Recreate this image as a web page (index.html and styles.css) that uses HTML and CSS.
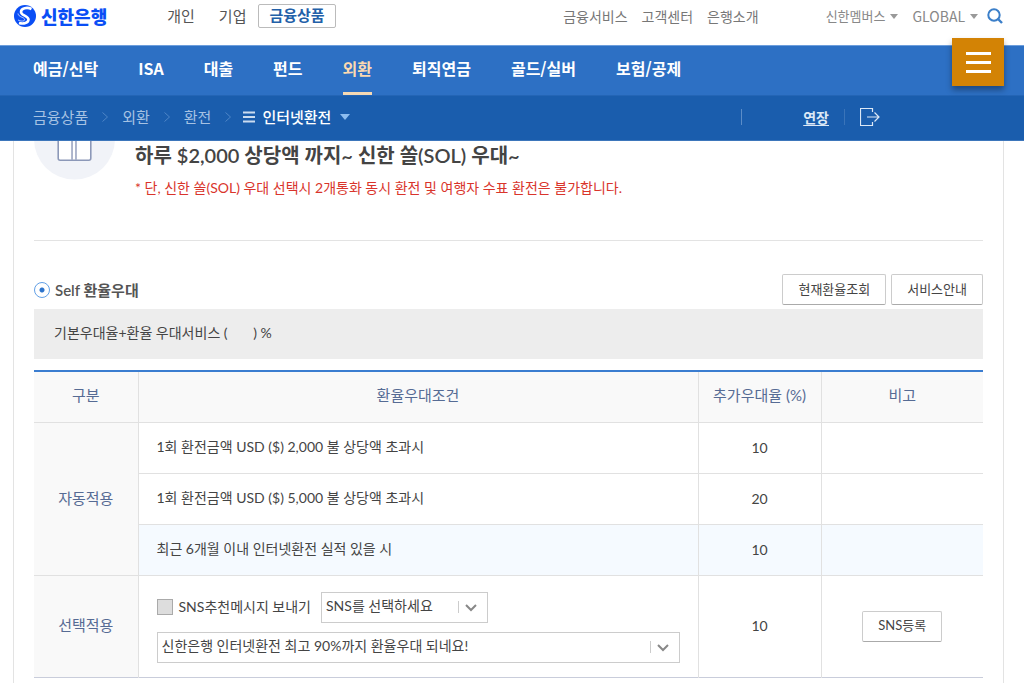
FILE: index.html
```html
<!DOCTYPE html>
<html lang="ko">
<head>
<meta charset="utf-8">
<meta name="viewport" content="width=device-width, initial-scale=1">
<title>신한은행 - 인터넷환전</title>
<link rel="stylesheet" href="styles.css">
</head>
<body>
<header class="header">
  <div class="topbar">
    <a class="logo" href="#">
      <svg class="logo-mark" viewBox="0 0 22 22" aria-hidden="true">
        <circle cx="11" cy="11" r="11" fill="#0a4ef5"/>
        <path d="M17.500 4C13 1.800 7 3.200 7 7 7 10.800 14.500 10.600 14.500 14.600 14.500 18 9.500 19.300 5 18" fill="none" stroke="#fff" stroke-width="2.600"/>
        <path d="M4 8.500C4.500 12.500 10.600 12 10.600 14.600 10.600 16.400 7.500 16.600 4 15" fill="none" stroke="#fff" stroke-width=".7"/>
      </svg>
      <span class="logo-text">신한은행</span>
    </a>
    <nav class="segments" aria-label="고객 구분">
      <a href="#">개인</a>
      <a href="#">기업</a>
      <a class="segment-current" href="#">금융상품</a>
    </nav>
    <nav class="services" aria-label="서비스">
      <a href="#">금융서비스</a>
      <a href="#">고객센터</a>
      <a href="#">은행소개</a>
    </nav>
    <div class="utility">
      <button type="button" class="drop">신한멤버스<span class="caret"></span></button>
      <button type="button" class="drop drop-global">GLOBAL<span class="caret"></span></button>
      <button type="button" class="search" aria-label="검색">
        <svg viewBox="0 0 16 16" aria-hidden="true"><circle cx="7" cy="7" r="5.700" fill="none" stroke="#3b7fc9" stroke-width="2"/><path d="M10.500 10.500l4.500 4.500" stroke="#3b7fc9" stroke-width="2.400"/></svg>
      </button>
    </div>
  </div>
  <nav class="main-nav" aria-label="주 메뉴">
    <a href="#">예금/신탁</a>
    <a href="#">ISA</a>
    <a href="#">대출</a>
    <a href="#">펀드</a>
    <a class="nav-current" href="#">외환</a>
    <a href="#">퇴직연금</a>
    <a href="#">골드/실버</a>
    <a href="#">보험/공제</a>
  </nav>
  <div class="subbar">
    <nav class="crumbs" aria-label="현재 위치">
      <a href="#">금융상품</a>
      <svg class="chevron" viewBox="0 0 6 10" aria-hidden="true"><path d="M.5.500L5.500 5 .5 9.500"/></svg>
      <a href="#">외환</a>
      <svg class="chevron" viewBox="0 0 6 10" aria-hidden="true"><path d="M.5.500L5.500 5 .5 9.500"/></svg>
      <a href="#">환전</a>
      <svg class="chevron" viewBox="0 0 6 10" aria-hidden="true"><path d="M.5.500L5.500 5 .5 9.500"/></svg>
      <button type="button" class="crumb-current">
        <svg class="lines" viewBox="0 0 12 12" aria-hidden="true"><path d="M0 1.500h12M0 6h12M0 10.500h12" stroke="#cbdcf0" stroke-width="2"/></svg>
        인터넷환전
        <span class="caret caret-light"></span>
      </button>
    </nav>
    <div class="session">
      <a class="extend" href="#">연장</a>
      <button type="button" class="logout" aria-label="로그아웃">
        <svg viewBox="0 0 20 18" aria-hidden="true"><path d="M12.500 4V.500H.5v17h12V14M7 9h12M14.500 4.500L19 9l-4.500 4.500" fill="none" stroke="#dce8f6" stroke-width="1.200"/></svg>
      </button>
    </div>
  </div>
  <button type="button" class="menu" aria-label="전체메뉴"><span></span><span></span><span></span></button>
</header>

<main class="panel">
  <section class="promo">
    <svg class="promo-icon" viewBox="0 0 82 82" aria-hidden="true">
      <circle cx="41" cy="41" r="41" fill="#f1f3f8"/>
      <path d="M24.500 32h33v28.500a2 2 0 0 1-2 2h-29a2 2 0 0 1-2-2z" fill="#fff" stroke="#8c98b8" stroke-width="1.600"/>
      <path d="M38.500 32v30M42.500 32v30" stroke="#8c98b8" stroke-width="1.400"/>
    </svg>
    <div class="promo-copy">
      <h2>하루 $2,000 상당액 까지~ 신한 쏠(SOL) 우대~</h2>
      <p>* 단, 신한 쏠(SOL) 우대 선택시 2개통화 동시 환전 및 여행자 수표 환전은 불가합니다.</p>
    </div>
  </section>

  <section class="self">
    <div class="self-head">
      <label class="option"><input type="radio" name="benefit" checked>Self 환율우대</label>
      <div class="actions">
        <button type="button" class="btn">현재환율조회</button>
        <button type="button" class="btn">서비스안내</button>
      </div>
    </div>
    <p class="summary">기본우대율+환율 우대서비스 ( <span class="rate"></span>) %</p>
    <table class="rates">
      <colgroup><col class="col-kind"><col><col class="col-rate"><col class="col-note"></colgroup>
      <thead>
        <tr><th scope="col">구분</th><th scope="col">환율우대조건</th><th scope="col">추가우대율 (%)</th><th scope="col">비고</th></tr>
      </thead>
      <tbody>
        <tr><th scope="rowgroup" rowspan="3">자동적용</th><td>1회 환전금액 USD ($) 2,000 불 상당액 초과시</td><td class="center">10</td><td></td></tr>
        <tr><td>1회 환전금액 USD ($) 5,000 불 상당액 초과시</td><td class="center">20</td><td></td></tr>
        <tr class="active"><td>최근 6개월 이내 인터넷환전 실적 있을 시</td><td class="center">10</td><td></td></tr>
      </tbody>
      <tbody>
        <tr>
          <th scope="row">선택적용</th>
          <td class="choice">
            <div class="choice-row">
              <label class="check"><input type="checkbox" disabled>SNS추천메시지 보내기</label>
              <select class="select select-short" aria-label="SNS 선택"><option>SNS를 선택하세요</option></select>
            </div>
            <select class="select" aria-label="추천메시지"><option>신한은행 인터넷환전 최고 90%까지 환율우대 되네요!</option></select>
          </td>
          <td class="center">10</td>
          <td class="center"><button type="button" class="btn">SNS등록</button></td>
        </tr>
      </tbody>
    </table>
  </section>
</main>
</body>
</html>
```
FILE: styles.css
```css
* { box-sizing: border-box; }

body {
  margin: 0;
  min-height: 100vh;
  display: flex;
  flex-direction: column;
  background: #fff;
  color: #444;
  font-family: Lato, "Noto Sans CJK KR", sans-serif;
  font-size: 14px;
  line-height: 20px;
}

a { color: inherit; text-decoration: none; }
button { font: inherit; color: inherit; background: none; border: 0; padding: 0; cursor: pointer; }
h2, p { margin: 0; }
svg { display: block; flex: none; }

/* Header */
.header { position: sticky; top: 0; z-index: 10; white-space: nowrap; font-family: "Noto Sans CJK KR", sans-serif; }

.topbar {
  height: 45px;
  padding: 0 21px 13px 14px;
  display: flex;
  align-items: center;
  background: #fff;
}
.logo { display: flex; align-items: center; gap: 5px; margin-right: 60px; }
.logo-mark { width: 22px; height: 22px; }
.logo-text { color: #0a4ef5; font-size: 18px; font-weight: 900; }

.segments { display: flex; align-items: center; gap: 24px; font-size: 15px; color: #555; }
.segment-current {
  margin-left: -12px;
  padding: 0 10px;
  height: 24px;
  line-height: 20px;
  border: 1px solid #bbb;
  border-radius: 2px;
  color: #2360a8;
  font-weight: 700;
}
.services { display: flex; gap: 14px; margin-left: auto; margin-right: 67px; color: #777; }
.utility { display: flex; align-items: center; gap: 14px; font-size: 13px; color: #888; }
.drop { display: flex; align-items: center; gap: 5px; }
.drop-global { font-size: 14px; }
.caret { border: 4px solid transparent; border-top: 5px solid #999; border-bottom: 0; }
.search { margin-left: -5px; }
.search svg { width: 16px; height: 16px; }

.main-nav {
  height: 51px;
  padding: 0 33px;
  display: flex;
  gap: 40px;
  background: #2d70c4;
  border-top: 1px solid #6d9edc;
  border-bottom: 1px solid #2465b5;
  color: #fff;
  font-size: 16px;
  font-weight: 700;
  line-height: 44px;
}
.nav-current { color: #fbd9b0; border-bottom: 3px solid #f5d9b4; }

.subbar {
  height: 45px;
  padding: 0 144px 2px 33px;
  display: flex;
  align-items: center;
  justify-content: space-between;
  background: #1a5dad;
  border-bottom: 1px solid #3d76bb;
  font-size: 15px;
}
.crumbs { display: flex; align-items: center; gap: 14px; color: #a6c2e3; }
.chevron { width: 6px; height: 10px; fill: none; stroke: #4f86c6; }
.crumb-current { display: flex; align-items: center; gap: 7px; margin-left: -2px; color: #fff; font-weight: 500; }
.lines { width: 12px; height: 12px; }
.caret-light { margin-left: 2px; border-width: 5px; border-top: 6px solid #8dbdf0; border-bottom: 0; }
.session { display: flex; align-items: center; }
.extend {
  padding: 0 15px 0 61px;
  border-left: 1px solid #5c8dc8;
  border-right: 1px solid #3a74b9;
  line-height: 16px;
  font-size: 14px;
  font-weight: 700;
  color: #dce8f6;
  text-decoration: underline;
  text-underline-offset: 2px;
}
.logout { margin-left: 15px; }
.logout svg { width: 20px; height: 18px; }

.menu {
  position: absolute;
  top: 38px;
  right: 20px;
  width: 52px;
  height: 48px;
  display: flex;
  flex-direction: column;
  align-items: center;
  justify-content: center;
  gap: 6px;
  background: #d38305;
  box-shadow: 0 4px 6px rgba(0, 0, 0, .35);
}
.menu span { width: 25px; height: 3px; background: #fff; }

/* Content */
.panel {
  flex: 1;
  margin: -43px 20px 0 13px;
  padding: 0 20px;
  border: 1px solid #e3e3e3;
  border-top: 0;
  border-bottom: 0;
}
.promo {
  display: flex;
  gap: 20px;
  padding-bottom: 42px;
  border-bottom: 1px solid #e3e3e3;
}
.promo-icon { width: 81px; height: 82px; }
.promo-copy { padding-top: 42px; }
.promo h2 { font-size: 20px; font-weight: 600; line-height: 30px; color: #444; }
.promo p { margin-top: 8px; color: #d9342b; }

.self-head { display: flex; align-items: center; justify-content: space-between; padding: 33px 0 4px; }
.option { display: flex; align-items: center; gap: 5px; font-size: 15px; font-weight: 600; color: #555; }
.option input {
  appearance: none;
  width: 16px;
  height: 16px;
  margin: 0;
  border: 1px solid #62a0e6;
  border-radius: 50%;
  background: radial-gradient(circle, #2d74cc 2px, #fff 3px);
}
.actions { display: flex; gap: 5px; }
.btn {
  height: 31px;
  padding: 0 15px 2px;
  border: 1px solid #ccc;
  border-bottom-color: #aaa;
  border-radius: 2px;
  background: #fff;
  color: #444;
  font-size: 13px;
}
.summary { padding: 14px 20px 16px; background: #ededed; }
.rate { display: inline-block; width: 22px; }

.rates {
  width: 100%;
  margin-top: 11px;
  border-collapse: collapse;
  table-layout: fixed;
  border-top: 2px solid #3b7dd0;
  border-bottom: 1px solid #c9cddb;
}
.col-kind { width: 104px; }
.col-rate { width: 123px; }
.col-note { width: 162px; }
.rates th, .rates td { height: 51px; padding: 0 18px 2px; border: 1px solid #e1e1e1; text-align: left; }
.rates tr > :last-child { border-right: 0; }
.rates th:first-child { border-left: 0; }
.rates th { padding: 0 0 2px; background: #f9f9f9; color: #566b94; font-size: 15px; font-weight: 400; text-align: center; }
.rates thead th { border-top: 0; padding: 0 0 4px; }
.rates tbody:last-child th, .rates tbody:last-child td { border-bottom: 0; }
.rates .center { padding: 0; text-align: center; }
.active td { background: #f5faff; }

.rates .choice { padding: 16px 18px 14px; }
.choice-row { display: flex; align-items: center; gap: 10px; margin-bottom: 9px; }
.check { display: flex; align-items: center; gap: 6px; white-space: nowrap; }
.check input {
  appearance: none;
  width: 16px;
  height: 16px;
  margin: 0;
  border: 1px solid #aaa;
  background: #ddd;
}
.select {
  appearance: none;
  display: block;
  width: 100%;
  height: 31px;
  padding: 0 34px 2px 4px;
  border: 1px solid #ccc;
  border-radius: 0;
  background: #fff url("data:image/svg+xml,%3Csvg xmlns='http://www.w3.org/2000/svg' width='29' height='14'%3E%3Cpath d='M.5 1v12' stroke='%23ccc'/%3E%3Cpath d='M8 5l5 5 5-5' fill='none' stroke='%23888' stroke-width='2'/%3E%3C/svg%3E") no-repeat right center;
  color: #444;
  font: inherit;
}
.select-short { width: 167px; }
```
